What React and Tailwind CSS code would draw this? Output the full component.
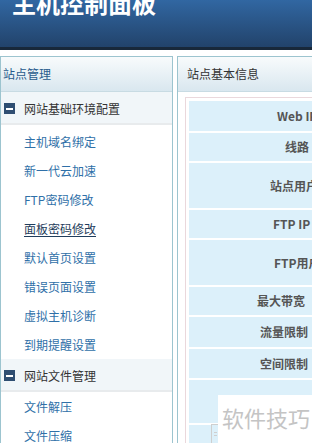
import React from "react";

const links1 = [
  { text: "主机域名绑定" },
  { text: "新一代云加速" },
  { text: "FTP密码修改" },
  { text: "面板密码修改", active: true },
  { text: "默认首页设置" },
  { text: "错误页面设置" },
  { text: "虚拟主机诊断" },
  { text: "到期提醒设置" },
];

const links2 = [{ text: "文件解压" }, { text: "文件压缩" }];

const rows = [
  { label: "Web IP", h: "h-[30px]", pl: "pl-[88px]" },
  { label: "线路", h: "h-[28px]", pl: "pl-[96px]" },
  { label: "站点用户", h: "h-[45px]", pl: "pl-[81px]" },
  { label: "FTP IP", h: "h-[28px]", pl: "pl-[84px]" },
  { label: "FTP用户", h: "h-[45px]", pl: "pl-[85px]" },
  { label: "最大带宽", h: "h-[28px]", pl: "pl-[68px]" },
  { label: "流量限制", h: "h-[30px]", pl: "pl-[71px]" },
  { label: "空间限制", h: "h-[29px]", pl: "pl-[71px]" },
  { label: "", h: "h-[43px]", pl: "pl-[71px]" },
  { label: "", h: "h-[30px]", pl: "pl-[71px]" },
];

function MinusIcon() {
  return (
    <span className="w-[11px] h-[11px] bg-[#2f4e72] flex items-center justify-center shrink-0">
      <span className="w-[7px] h-[2px] bg-white" />
    </span>
  );
}

function SectionRow({ title }) {
  return (
    <div className="h-[33px] bg-[#f1f6f9] border-b-2 border-[#e8ebed] flex items-center pl-[3px] pt-[2px]">
      <MinusIcon />
      <span className="ml-[9px] text-[12px] text-[#333]">{title}</span>
    </div>
  );
}

function LinkList({ items, className }) {
  return (
    <ul className={className}>
      {items.map((item) => (
        <li key={item.text} className="h-[29px] flex items-center pl-[23px]">
          <a
            href="#"
            className={
              item.active
                ? "text-[12px] text-[#1f3d5c] underline underline-offset-2"
                : "text-[12px] text-[#2f70a8]"
            }
          >
            {item.text}
          </a>
        </li>
      ))}
    </ul>
  );
}

function PanelHeader({ title, className }) {
  return (
    <div
      className={
        "h-[35px] border-b border-[#c8dbe3] bg-linear-to-b from-[#f8fbfc] to-[#d9e7ef] flex items-center " +
        className
      }
    >
      {title}
    </div>
  );
}

export default function App() {
  return (
    <div className="relative w-[312px] h-[443px] overflow-hidden bg-white font-['Noto_Sans_CJK_SC','Noto_Sans',sans-serif]">
      {/* TOP BAR */}
      <header className="h-[47px] overflow-hidden bg-linear-to-b from-[#3167a2] to-[#22436b]">
        <h1 className="-mt-[9px] ml-[12px] text-[24px] leading-none font-bold text-white whitespace-nowrap">
          主机控制面板
        </h1>
      </header>
      <div className="h-[3px] bg-[#18283a]" />

      <div className="flex gap-[4px] pt-[6px]">
        {/* SIDEBAR */}
        <aside className="w-[173px] h-[400px] shrink-0 border border-[#9cc4cf]">
          <PanelHeader
            title="站点管理"
            className="pl-[2px] text-[12px] text-[#285b8c]"
          />
          <SectionRow title="网站基础环境配置" />
          <LinkList items={links1} className="pt-[2px]" />
          <SectionRow title="网站文件管理" />
          <LinkList items={links2} />
        </aside>

        {/* SITE INFO */}
        <section className="w-[200px] h-[400px] shrink-0 border border-r-0 border-[#9cc4cf]">
          <PanelHeader
            title="站点基本信息"
            className="pl-[9px] text-[12px] text-[#333]"
          />
          <div className="pl-[7px] pt-[5px]">
            <div className="border border-[#ead8dc] p-[3px] flex flex-col gap-[2px]">
              {rows.map((row, index) => (
                <div
                  key={index}
                  className={
                    "w-[180px] bg-[#dcf0fa] flex items-center whitespace-nowrap text-[12px] font-bold text-[#555] " +
                    row.h +
                    " " +
                    row.pl
                  }
                >
                  {row.label}
                </div>
              ))}
            </div>
          </div>
        </section>
      </div>

      {/* WATERMARK */}
      <div className="absolute left-[211px] top-[424px] w-[8px] h-[20px] border border-[#cfcfcf] flex flex-col justify-center items-center gap-[2px]">
        <span className="w-[3px] h-[1px] bg-[#cfcfcf]" />
        <span className="w-[3px] h-[1px] bg-[#cfcfcf]" />
      </div>
      <div className="absolute left-[218px] top-[395px] w-[100px] h-[50px] bg-white pl-[4px] pt-[11px]">
        <span className="text-[22px] leading-none text-[#c4c4c4] whitespace-nowrap">
          软件技巧
        </span>
      </div>
    </div>
  );
}
